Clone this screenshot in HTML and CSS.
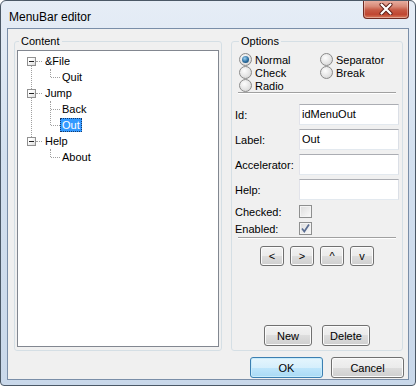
FILE: index.html
```html
<!DOCTYPE html>
<html lang="en">
<head>
  <meta charset="UTF-8" />
  <title>MenuBar editor</title>
  <link rel="stylesheet" href="styles.css">
</head>
<body>

  <div class="window">
    <div class="titlebar">
      <span class="title">MenuBar editor</span>
      <button class="close-btn" title="Close">
        <svg width="14" height="12" viewBox="0 0 14 12">
          <path d="M2.5 1.5 L11.5 10.5 M11.5 1.5 L2.5 10.5" stroke="#5a1c15" stroke-width="4" stroke-linecap="round"/>
          <path d="M2.5 1.5 L11.5 10.5 M11.5 1.5 L2.5 10.5" stroke="#fff" stroke-width="2.2" stroke-linecap="round"/>
        </svg>
      </button>
    </div>

    <div class="client">
      <div class="panels">
        <fieldset class="group content-group">
          <legend>Content</legend>
          <div class="tree">
            <ul class="roots">
              <li class="node">
                <div class="row"><span class="expander"></span><span class="dash"></span><span class="label">&amp;File</span></div>
                <ul class="children n1">
                  <li><div class="row"><span class="dash"></span><span class="label">Quit</span></div></li>
                </ul>
              </li>
              <li class="node">
                <div class="row"><span class="expander"></span><span class="dash"></span><span class="label">Jump</span></div>
                <ul class="children n2">
                  <li><div class="row"><span class="dash"></span><span class="label">Back</span></div></li>
                  <li><div class="row"><span class="dash"></span><span class="label selected">Out</span></div></li>
                </ul>
              </li>
              <li class="node">
                <div class="row"><span class="expander"></span><span class="dash"></span><span class="label">Help</span></div>
                <ul class="children n1">
                  <li><div class="row"><span class="dash"></span><span class="label">About</span></div></li>
                </ul>
              </li>
            </ul>
          </div>
        </fieldset>

        <fieldset class="group options-group">
          <legend>Options</legend>
          <div class="radios">
            <div class="radio checked"><span class="radio-dot"></span>Normal</div>
            <div class="radio"><span class="radio-dot"></span>Separator</div>
            <div class="radio"><span class="radio-dot"></span>Check</div>
            <div class="radio"><span class="radio-dot"></span>Break</div>
            <div class="radio"><span class="radio-dot"></span>Radio</div>
          </div>

          <div class="sep"></div>

          <div class="fields">
            <span class="field-label">Id:</span><div class="input">idMenuOut</div>
            <span class="field-label">Label:</span><div class="input">Out</div>
            <span class="field-label">Accelerator:</span><div class="input"></div>
            <span class="field-label">Help:</span><div class="input"></div>
          </div>

          <div class="checks">
            <span class="field-label">Checked:</span><span class="checkbox"></span>
            <span class="field-label">Enabled:</span>
            <span class="checkbox">
              <svg width="11" height="11" viewBox="0 0 11 11">
                <path d="M2 5.5 L4.3 8.5 L9 1.5" fill="none" stroke="#5a6d92" stroke-width="1.7"/>
              </svg>
            </span>
          </div>

          <div class="sep sep-low"></div>

          <div class="arrows">
            <button class="btn small">&lt;</button>
            <button class="btn small">&gt;</button>
            <button class="btn small">^</button>
            <button class="btn small">v</button>
          </div>

          <div class="spacer"></div>

          <div class="item-buttons">
            <button class="btn mid">New</button>
            <button class="btn mid">Delete</button>
          </div>
        </fieldset>
      </div>

      <div class="footer">
        <button class="btn wide default">OK</button>
        <button class="btn wide">Cancel</button>
      </div>
    </div>
  </div>

</body>
</html>
```

FILE: styles.css
```css
* {
  box-sizing: border-box;
}
body {
  margin: 0;
  font-family: "Liberation Sans", Arial, sans-serif;
  font-size: 11px;
  color: #000;
  background: #fff;
}
.window {
  width: 416px;
  height: 386px;
  border: 1px solid #4b5866;
  border-radius: 6px 6px 4px 4px;
  background: linear-gradient(#e6edf6, #d3e0ef 40%, #c9d8ea);
  display: flex;
  flex-direction: column;
  overflow: hidden;
}
.titlebar {
  height: 27px;
  display: flex;
  justify-content: space-between;
  align-items: flex-start;
}
.title {
  font-size: 12px;
  padding: 9px 0 0 8px;
}
.close-btn {
  width: 46px;
  height: 19px;
  margin: -1px 6px 0 0;
  padding: 0;
  border: 1px solid #6e2a22;
  border-top: none;
  border-radius: 0 0 4px 4px;
  background: linear-gradient(#eab3a6, #d98b79 35%, #c75a45 55%, #c04631 80%, #d87a5c);
  box-shadow: inset 0 0 0 1px rgba(255,255,255,0.35);
  display: flex;
  align-items: center;
  justify-content: center;
}
.client {
  flex: 1;
  margin: 0 6px 5px 6px;
  border: 1px solid #7a8ea8;
  background: #f0f0f0;
  padding: 6px 4px 1px 6px;
  display: flex;
  flex-direction: column;
}
.panels {
  height: 316px;
  display: flex;
  gap: 9px;
  padding-right: 1px;
}
.group {
  margin: 0;
  padding: 0;
  border: 1px solid #d5dfe5;
  border-radius: 3px;
  display: flex;
  flex-direction: column;
  min-width: 0;
}
.group legend {
  margin-left: 4px;
  padding: 0 2px;
  line-height: 13px;
}
.content-group {
  width: 208px;
}
.options-group {
  width: 172px;
  padding: 0 3px;
}

/* tree */
.tree {
  flex: 1;
  margin: 2px 2px 3px 2px;
  background: #fff;
  border: 1px solid #828790;
  padding: 2px 0 0 9px;
}
.tree ul {
  list-style: none;
  margin: 0;
  padding: 0;
}
.roots {
  position: relative;
}
.roots::before {
  content: "";
  position: absolute;
  left: 4px;
  top: 8px;
  height: 80px;
  border-left: 1px dotted #a0a0a0;
}
.row {
  height: 16px;
  display: flex;
  align-items: center;
  position: relative;
}
.expander {
  width: 9px;
  height: 9px;
  border: 1px solid #919191;
  background: linear-gradient(135deg, #fff 30%, #dcdcdc);
  position: relative;
  z-index: 1;
}
.expander::after {
  content: "";
  position: absolute;
  left: 1px;
  top: 3px;
  width: 5px;
  height: 1px;
  background: #222;
}
.dash {
  width: 6px;
  border-top: 1px dotted #a0a0a0;
}
.children {
  position: relative;
  margin-left: 23px !important;
}
.children::before {
  content: "";
  position: absolute;
  left: 0;
  top: 0;
  border-left: 1px dotted #a0a0a0;
}
.children.n1::before {
  height: 8px;
}
.children.n2::before {
  height: 24px;
}
.children .dash {
  width: 9px;
  margin-left: 1px;
}
.label {
  padding: 0 2px;
  line-height: 14px;
  height: 14px;
  margin-left: 1px;
}
.children .label {
  margin-left: 0;
}
.label.selected {
  background: #3399ff;
  color: #fff;
  outline: 1px dotted #1a3a66;
  outline-offset: -1px;
}

/* options */
.radios {
  margin-top: 5px;
  padding-left: 4px;
  display: grid;
  grid-template-columns: 81px 1fr;
  grid-auto-rows: 13px;
}
.radio {
  display: flex;
  align-items: center;
  gap: 3px;
}
.radio-dot {
  width: 13px;
  height: 13px;
  border-radius: 50%;
  border: 1px solid #8a8a8a;
  background: radial-gradient(circle at 40% 35%, #fdfdfd, #e2e2e2 60%, #c8c8c8);
  display: flex;
  align-items: center;
  justify-content: center;
}
.radio.checked .radio-dot::after {
  content: "";
  width: 7px;
  height: 7px;
  border-radius: 50%;
  background: radial-gradient(circle at 40% 35%, #9fd3f3, #2a6c9e 55%, #163e62);
}
.sep {
  height: 2px;
  margin: 0 3px;
  border-top: 1px solid #a0a0a0;
  border-bottom: 1px solid #fff;
}
.fields {
  margin-top: 10px;
  display: grid;
  grid-template-columns: 64px 100px;
  grid-auto-rows: 21px;
  row-gap: 4px;
  align-items: center;
}
.input {
  height: 21px;
  background: #fff;
  border: 1px solid #abadb3;
  border-color: #abadb3 #dbdfe6 #e3e9ef #e2e3ea;
  padding: 0 2px;
  line-height: 19px;
}
.checks {
  margin-top: 3px;
  display: grid;
  grid-template-columns: 64px 13px;
  grid-auto-rows: 17px;
  align-items: center;
}
.checkbox {
  width: 13px;
  height: 13px;
  border: 1px solid #8e8f8f;
  background: linear-gradient(135deg, #dcdcdc, #fafafa);
  box-shadow: inset 0 0 0 1px #f4f4f4;
  display: flex;
  align-items: center;
  justify-content: center;
}
.arrows {
  margin-top: 7px;
  display: flex;
  justify-content: center;
  gap: 6px;
}
.spacer {
  flex: 1;
}
.item-buttons {
  margin-bottom: 4px;
  display: flex;
  justify-content: center;
  gap: 10px;
}

/* buttons */
.btn {
  font-family: inherit;
  font-size: 11px;
  color: #000;
  padding: 0;
  border: 1px solid #707070;
  border-radius: 3px;
  background: linear-gradient(#f2f2f2, #ebebeb 50%, #dddddd 50%, #cfcfcf);
  box-shadow: inset 0 0 0 1px #fbfbfb;
}
.btn.small {
  width: 24px;
  height: 20px;
}
.btn.mid {
  width: 48px;
  height: 21px;
}
.btn.wide {
  width: 73px;
  height: 21px;
}
.btn.default {
  border-color: #3c7fb1;
  background: linear-gradient(#e5f5fd, #d6effc 50%, #bfe6fb 50%, #a9daf5);
  box-shadow: inset 0 0 0 1px #c8ecfb;
}
.footer {
  margin-top: 6px;
  display: flex;
  justify-content: flex-end;
  gap: 8px;
}
```
